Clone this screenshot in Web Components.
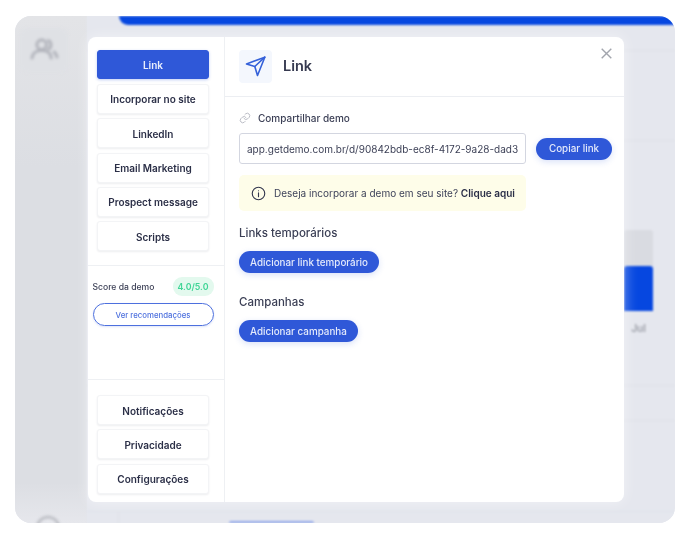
<!DOCTYPE html>
<html lang="pt-BR"><head><meta charset="utf-8"><title>Link</title>
<style>
html,body{margin:0;padding:0;background:#fff;width:690px;height:539px;overflow:hidden;font-family:Inter,"Liberation Sans",sans-serif;}
</style></head><body>
<app-frame>
  <demo-backdrop slot="back"></demo-backdrop>
  <share-modal slot="over">
    <side-nav slot="nav">
      <nav-btn active>Link</nav-btn>
      <nav-btn>Incorporar no site</nav-btn>
      <nav-btn>LinkedIn</nav-btn>
      <nav-btn>Email Marketing</nav-btn>
      <nav-btn>Prospect message</nav-btn>
      <nav-btn>Scripts</nav-btn>
      <score-box slot="score"></score-box>
      <nav-btn slot="foot">Notificações</nav-btn>
      <nav-btn slot="foot">Privacidade</nav-btn>
      <nav-btn slot="foot">Configurações</nav-btn>
    </side-nav>
    <link-panel slot="main"></link-panel>
  </share-modal>
</app-frame>
<script>
function def(name, css, html){
  customElements.define(name, class extends HTMLElement{
    constructor(){super();const r=this.attachShadow({mode:'open'});r.innerHTML='<style>'+css+'</style>'+html;}
  });
}
def('app-frame',`
  :host{display:block;position:absolute;left:15px;top:16px;width:660px;height:507px;border-radius:16px;overflow:hidden;background:#e5e7ee;}
  .over{position:absolute;left:72.500px;top:21px;filter:blur(.35px);}
`,`<slot name="back"></slot><div class="over"><slot name="over"></slot></div>`);

def('demo-backdrop',`
  :host{display:flex;width:660px;height:507px;color:#8e929c;font-family:Inter,sans-serif;}
  .rail{width:72px;flex:none;background:linear-gradient(#e3e4e7 0,#dcdee3 30%,#dcdee3 92%,#e6e7ec 100%);display:flex;flex-direction:column;justify-content:space-between;padding:12px 0 0 5px;box-sizing:border-box;}
  .rail>*{filter:blur(1.400px);}
  .tile{width:48px;height:45px;border-radius:8px;background:#dfe1e5;display:flex;align-items:center;justify-content:center;}
  .dot{width:20px;height:20px;border-radius:50%;border:2px solid #b1b3ba;margin:0 0 -17px 16px;}
  .main{flex:1;background:#e5e7ee;display:flex;flex-direction:column;min-width:0;}
  .main>*{flex:none;}
  .fx{filter:blur(1.200px);}
  .bar{height:9px;margin-left:32px;background:#0647e0;border-radius:0 0 0 10px;}
  .top{height:25px;border-bottom:1px solid #dfe1e7;}
  .row{height:89px;border-bottom:1px solid #dfe1e7;}
  .chart{display:flex;flex-direction:column;align-items:flex-end;padding-right:22px;height:245px;box-sizing:border-box;border-bottom:1px solid #dfe1e7;}
  .chart i{display:block;width:29px;flex:none;}
  .g{height:36px;background:#d9dbe1;margin-top:89px;border-radius:3px 3px 0 0;}
  .b{height:45px;background:#0647e0;border-radius:3px 3px 0 0;}
  .jul{font:600 10px/12px Inter,sans-serif;width:29px;text-align:center;margin-top:11px;color:#9a9da6;}
  .l1{height:34px;border-bottom:1px solid #dfe1e7;}
  .l2{height:90px;border-bottom:1px solid #dfe2ea;}
  .foot{flex:1 !important;margin-left:31px;border-left:1px solid #dfe1e7;position:relative;}
  .pill{position:absolute;left:110px;bottom:0;width:85px;height:2px;background:#8fa6ea;border-radius:3px 3px 0 0;}
`,`<div class="rail"><div class="tile"><svg width="29" height="25" viewBox="0 0 30 26" fill="none" stroke="#aeb0b8" stroke-width="2.800"><circle cx="12" cy="7" r="5"/><path d="M2 22c0-6 4-9 10-9s10 3 10 9"/><path d="M18 2a5.200 5.200 0 0 1 0 10M24 14c3 1.500 4 4 4 7"/></svg></div><div class="dot"></div></div>
<div class="main fx"><div class="bar"></div><div class="top"></div><div class="row"></div>
<div class="chart"><i class="g"></i><i class="b"></i><div class="jul">Jul</div></div>
<div class="l1"></div><div class="l2"></div><div class="foot"><div class="pill"></div></div></div>`);

def('share-modal',`
  :host{display:flex;width:536.500px;height:465px;background:#fff;border-radius:8px;box-shadow:0 0 14px rgba(255,255,255,.5);overflow:hidden;font-family:Inter,"Liberation Sans",sans-serif;}
  .nav{width:136.500px;border-right:1px solid #eef0f3;flex:none;display:flex;}
  .main{flex:1;min-width:0;display:flex;}
`,`<div class="nav"><slot name="nav"></slot></div><div class="main"><slot name="main"></slot></div>`);

def('side-nav',`
  :host{display:flex;flex-direction:column;width:100%;height:100%;}
  .top{display:flex;flex-direction:column;gap:4.300px;padding:13px 15px 15px 9.500px;border-bottom:1px solid #eef0f3;height:229px;box-sizing:border-box;flex:none;}
  .mid{height:114px;box-sizing:border-box;border-bottom:1px solid #eef0f3;flex:none;}
  .foot{display:flex;flex-direction:column;gap:4.300px;padding:15px 15px 0 9.500px;}
`,`<div class="top"><slot></slot></div><div class="mid"><slot name="score"></slot></div><div class="foot"><slot name="foot"></slot></div>`);

def('nav-btn',`
  :host{display:flex;align-items:center;justify-content:center;height:30px;flex:none;box-sizing:border-box;padding-top:1px;background:#fff;border:1px solid #f3f4f6;border-radius:3px;box-shadow:0 1px 2px rgba(30,40,70,.08);font:600 10px/1 Inter,"Liberation Sans",sans-serif;color:#2b2f47;white-space:nowrap;}
  :host([active]){height:29px;margin-bottom:.7px;background:#2f58d8;border-color:#2f58d8;color:#e9eefc;box-shadow:0 1px 3px rgba(47,88,216,.3);}
`,`<slot></slot>`);

def('score-box',`
  :host{display:block;padding:11px 10px 0 5px;font-family:Inter,"Liberation Sans",sans-serif;}
  .r{display:flex;justify-content:space-between;align-items:center;height:19px;width:121px;}
  .t{font-size:8.600px;color:#3b3f55;font-weight:500;}
  .b{background:#e3f9ee;color:#3fd596;font-size:8.800px;font-weight:600;border-radius:9px;height:19px;width:41px;display:flex;align-items:center;justify-content:center;}
  .v{margin-top:7px;height:23px;box-sizing:border-box;width:121px;border:1px solid #4d70de;border-radius:12px;display:flex;align-items:center;justify-content:center;font-size:7.800px;font-weight:500;color:#4d70de;box-shadow:0 1px 2px rgba(47,88,216,.15);}
`,`<div class="r"><span class="t">Score da demo</span><span class="b">4.0/5.0</span></div><div class="v">Ver recomendações</div>`);

def('pill-btn',`
  :host{display:inline-flex;align-items:center;justify-content:center;height:22px;min-width:76px;box-sizing:border-box;padding:1px 11px 0;border-radius:11px;background:#2f58d8;color:#e3e9fb;font:500 9.850px/1 Inter,"Liberation Sans",sans-serif;white-space:nowrap;box-shadow:0 2px 6px rgba(47,88,216,.18);}
`,`<slot></slot>`);

def('link-panel',`
  :host{display:flex;flex-direction:column;width:100%;font-family:Inter,"Liberation Sans",sans-serif;color:#2b2f47;position:relative;}
  .head{height:60px;flex:none;display:flex;align-items:center;gap:11px;padding:0 14px;border-bottom:1px solid #eceef2;box-sizing:border-box;}
  .ico{width:33px;height:33px;border-radius:4px;background:#f4f7fd;display:flex;align-items:center;justify-content:center;margin-top:-1px;}
  h1{margin:-3px 0 0;font-size:14.500px;font-weight:600;color:#363a50;}
  .x{position:absolute;top:11px;right:12px;width:11px;height:11px;}
  .body{padding:14px 12px 0 14px;display:flex;flex-direction:column;}
  .lab{display:flex;align-items:center;gap:7px;font-size:10px;font-weight:500;color:#3b3f55;height:14px;}
  .urlrow{display:flex;align-items:center;gap:10px;margin-top:8px;}
  .url{width:287px;flex:none;height:31px;box-sizing:border-box;border:1px solid #d3d6e0;border-radius:3px;padding:1px 7px 0;display:flex;align-items:center;font-size:10px;color:#3b3f55;white-space:nowrap;}
  .note{margin-top:11px;width:287px;height:36px;background:#fefde9;border-radius:5px;display:flex;align-items:center;gap:8px;padding:0 12px;box-sizing:border-box;font-size:10px;color:#3f435a;white-space:nowrap;}
  .note svg{flex:none;}
  .note b{font-weight:600;color:#2b2f47;}
  h2{margin:15px 0 0;font-size:11.500px;line-height:14px;font-weight:500;color:#3b3f55;}
  .b{margin-top:11px;display:flex;}
  .h2b{margin-top:22px;}
`,`<div class="head"><div class="ico"><svg width="22" height="22" viewBox="0 0 22 22" fill="none" stroke="#3561d9" stroke-width="1.600" stroke-linejoin="round" stroke-linecap="round"><path d="M1.500 9 19.800 2.200 12.500 20.500 9.800 11.500Z"/><path d="M9.800 11.500 19.800 2.200"/></svg></div><h1>Link</h1></div>
<svg class="x" viewBox="0 0 11 11" stroke="#a2a5ad" stroke-width="1.400" fill="none"><path d="M.7.7 10.300 10.300M10.300.7.7 10.300"/></svg>
<div class="body">
<div class="lab"><svg width="12" height="12" viewBox="0 0 24 24" fill="none" stroke="#b4b7c0" stroke-width="1.800" stroke-linecap="round" stroke-linejoin="round"><path d="M10 13a5 5 0 0 0 7.500.5l3-3a5 5 0 0 0-7-7l-1.700 1.700"/><path d="M14 11a5 5 0 0 0-7.500-.5l-3 3a5 5 0 0 0 7 7l1.700-1.700"/></svg><span>Compartilhar demo</span></div>
<div class="urlrow"><div class="url">app.getdemo.com.br/d/90842bdb-ec8f-4172-9a28-dad3</div><pill-btn>Copiar link</pill-btn></div>
<div class="note"><svg width="15" height="15" viewBox="0 0 24 24" fill="none" stroke="#33374e" stroke-width="1.800" stroke-linecap="round"><circle cx="12" cy="12" r="10"/><path d="M12 11v6M12 7.500v.1"/></svg><span>Deseja incorporar a demo em seu site? <b>Clique aqui</b></span></div>
<h2>Links temporários</h2>
<div class="b"><pill-btn>Adicionar link temporário</pill-btn></div>
<h2 class="h2b">Campanhas</h2>
<div class="b"><pill-btn>Adicionar campanha</pill-btn></div>
</div>`);
</script>
</body></html>
